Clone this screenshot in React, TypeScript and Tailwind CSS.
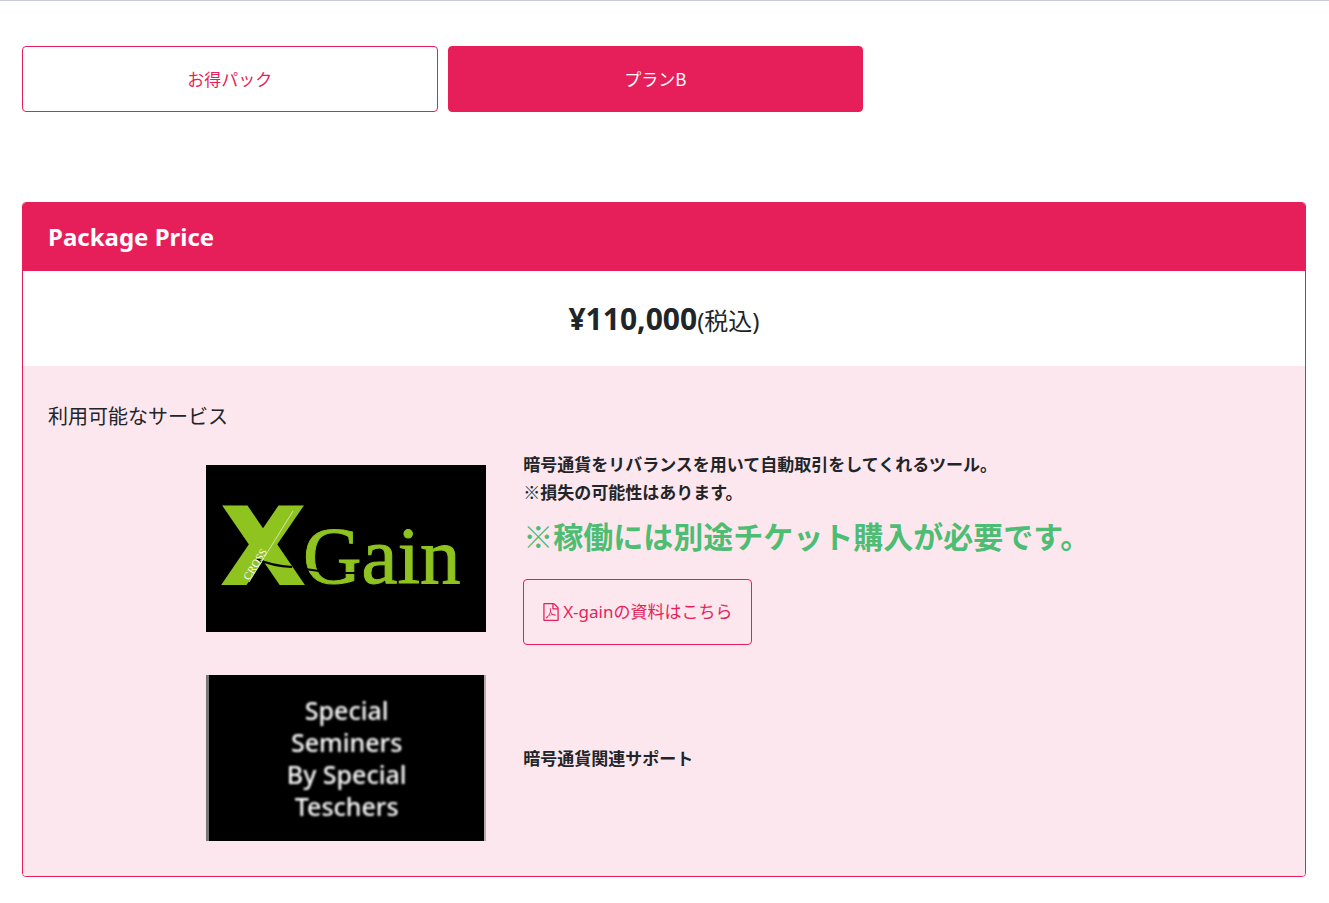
import type { ReactNode } from "react";

function FilePdfIcon() {
  return (
    <svg
      className="w-4 h-[18px] flex-shrink-0"
      viewBox="0 0 1536 1792"
      fill="currentColor"
      aria-hidden="true"
    >
      <path d="M1468 380q28 28 48 76t20 88v1152q0 40-28 68t-68 28h-1344q-40 0-68-28t-28-68v-1600q0-40 28-68t68-28h896q40 0 88 20t76 48zm-444-244v376h376q-10-29-22-41l-313-313q-12-12-41-22zm384 1528v-1024h-416q-40 0-68-28t-28-68v-416h-768v1536h1280zm-514-593q33 26 84 56 59-7 117-7 147 0 177 49 16 22 2 52 0 1-1 2l-2 2v1q-6 38-71 38-48 0-115-20t-130-53q-221 24-392 83-153 262-242 262-15 0-28-7l-24-12q-1-1-6-5-10-10-6-36 9-40 56-91.5t132-96.5q14-9 23 6 2 2 2 4 52-85 107-197 68-136 104-262-24-82-30.5-159.5t6.5-127.5q11-40 42-40h22q23 0 35 15 18 21 9 68-2 6-4 8 1 3 1 8v30q-2 123-14 192 55 164 146 238zm-576 411q52-24 137-158-51 40-87.5 84t-49.5 74zm398-920q-15 42-2 132 1-7 7-44 0-3 7-43 1-4 4-8-1-1-1-2t-1-2-1-3q-1-22-13-36 0 1-1 2v2zm-124 661q135-54 284-81-2-1-13-9.5t-16-13.5q-76-67-127-176-27 86-83 197-30 56-45 83zm646-16q-24-24-140-24 76 28 124 28 14 0 18-1 0-1-2-3z" />
    </svg>
  );
}

function XGainLogo() {
  return (
    <svg
      className="w-[280px] h-[167px] bg-black"
      viewBox="0 0 280 167"
      role="img"
      aria-label="CROSS X Gain"
    >
      <g fill="#8fc31f" stroke="#8fc31f">
        <text
          x="17"
          y="118"
          fontSize="104"
          fontWeight="700"
          fontFamily="'DejaVu Sans', sans-serif"
          strokeWidth="4"
        >
          X
        </text>
        <text
          x="97"
          y="118"
          fontSize="81"
          fontFamily="'Liberation Serif', serif"
          strokeWidth="1"
        >
          Gain
        </text>
      </g>
      <path d="M51 94Q66 101 86 102" stroke="#000" strokeWidth="2" fill="none" />
      <path d="M99 104L113 106M136 108L150 108" stroke="#000" strokeWidth="2" />
      <path d="M43 117L87 46" stroke="#d5e8a8" strokeWidth="1" />
      <text
        transform="translate(43 116) rotate(-58)"
        fill="#fff"
        fontSize="11"
        fontFamily="'Liberation Serif', serif"
      >
        CROSS
      </text>
    </svg>
  );
}

function SeminarBanner() {
  return (
    <div className="w-[280px] h-[166px] pt-[19px] bg-black border-l-3 border-r-2 border-l-[#777] border-r-[#b9a8ae] text-center text-white text-[25px] leading-8 font-medium font-['Noto_Sans',sans-serif]">
      <p className="blur-[1px]">
        Special
        <br />
        Seminers
        <br />
        By Special
        <br />
        Teschers
      </p>
    </div>
  );
}

function NoteMark() {
  return (
    <span className="font-normal font-['Noto_Sans_CJK_JP',sans-serif]">※</span>
  );
}

function Service({ image, children }: { image: ReactNode; children: ReactNode }) {
  return (
    <li className="grid max-md:grid-cols-1 grid-cols-[11fr_19fr] gap-x-[37px] gap-y-4 items-center">
      <div className="flex max-md:justify-start justify-end">{image}</div>
      <div>{children}</div>
    </li>
  );
}

export default function App() {
  return (
    <main className="border-t border-[#c9ccd6] pl-[22px] pr-[23px] pt-[45px] pb-[26px] text-[#212529] font-['Noto_Sans','Noto_Sans_CJK_JP',sans-serif]">
      <div className="max-md:w-full w-2/3 pr-[15px] flex gap-[10px] text-[17px] font-['Noto_Sans_CJK_JP',sans-serif]">
        <button
          type="button"
          className="flex-1 h-[66px] rounded border border-[#e61f5a] text-[#e61f5a]"
        >
          お得パック
        </button>
        <button
          type="button"
          className="flex-1 h-[66px] rounded border border-[#e61f5a] bg-[#e61f5a] text-white"
        >
          プランB
        </button>
      </div>

      <section className="mt-[90px] rounded border border-[#e61f5a] overflow-hidden">
        <h2 className="px-[25px] py-4 bg-[#e61f5a] text-white text-2xl leading-9 font-bold">
          Package Price
        </h2>

        <p className="pt-[25px] pb-[23px] text-center text-2xl leading-[45px]">
          <span className="text-[30px] font-bold">¥110,000</span>(税込)
        </p>

        <div className="px-[25px] pt-9 pb-[35px] bg-[#fde7ee]">
          <h3 className="mb-[19px] text-xl leading-[30px]">利用可能なサービス</h3>

          <ul className="flex flex-col gap-[30px]">
            <Service image={<XGainLogo />}>
              <p className="text-[17px] leading-[27px] font-bold">
                暗号通貨をリバランスを用いて自動取引をしてくれるツール。
                <br />
                <NoteMark />
                損失の可能性はあります。
              </p>
              <p className="mt-[7px] mb-5 text-[30px] leading-[45px] font-bold text-[#4dbd74]">
                <NoteMark />
                稼働には別途チケット購入が必要です。
              </p>
              <a
                href="#x-gain"
                className="inline-flex items-center gap-1 h-[66px] px-[19px] rounded border border-[#e61f5a] text-[#e61f5a] text-[17px] align-top"
              >
                <FilePdfIcon />
                X-gainの資料はこちら
              </a>
            </Service>

            <Service image={<SeminarBanner />}>
              <p className="text-[17px] leading-[27px] font-bold">
                暗号通貨関連サポート
              </p>
            </Service>
          </ul>
        </div>
      </section>
    </main>
  );
}
